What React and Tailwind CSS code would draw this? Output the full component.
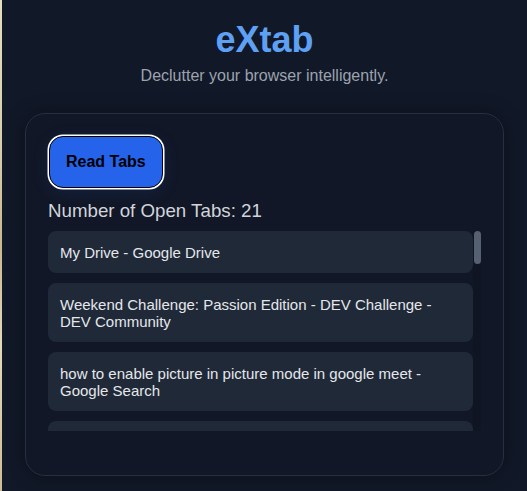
import React, { useState } from "react";

const initialTabs = [
  "My Drive - Google Drive",
  "Weekend Challenge: Passion Edition - DEV Challenge - DEV Community",
  "how to enable picture in picture mode in google meet - Google Search",
  "Inbox (1,204) - Gmail",
  "chrome.tabs - Chrome Extensions API Reference - Chrome for Developers",
  "Tailwind CSS - Rapidly build modern websites without ever leaving your HTML",
  "GitHub - Your Repositories",
  "YouTube",
  "React Reference Overview - React",
  "Stack Overflow - Where Developers Learn, Share, & Build Careers",
  "ChatGPT",
  "Google Calendar - Week of March 10",
  "Notion - Project Notes",
  "MDN Web Docs",
  "Manifest V3 migration checklist - Chrome for Developers",
  "Figma - Extension UI",
  "Hacker News",
  "LinkedIn Feed",
  "Google Meet",
  "Spotify - Web Player",
  "Vite - Next Generation Frontend Tooling",
];

export default function App() {
  const [tabs, setTabs] = useState(initialTabs);

  const readTabs = () => {
    // the popup just re-reads the same list here
    setTabs([...initialTabs]);
  };

  return (
    <div
      className="flex min-h-[491px] bg-[#111827]"
      style={{ fontFamily: '"Liberation Sans", Arial, sans-serif' }}
    >
      {/* strip of the desktop showing at the left edge */}
      <div className="w-[2px] shrink-0 bg-[linear-gradient(to_bottom,#e8dcc0_0%,#d8ccae_30%,#c9b98f_50%,#e4d8bc_70%,#cdbd96_100%)]" />

      <div className="flex-1 px-[23px] pt-5">
        <h1 className="text-center text-4xl font-bold leading-10 text-[#5ea0f4]">eXtab</h1>
        <p className="mt-1 text-center text-base text-[#9ca3af]">
          Declutter your browser intelligently.
        </p>

        <div className="mt-[25px] rounded-[20px] border border-[#262f3f] bg-[#111726] p-[22px] shadow-[0_0_18px_rgba(0,0,0,0.35)]">
          <button
            onClick={readTabs}
            className="ml-[1px] rounded-[14px] border border-black bg-[#2563eb] px-4 py-[13px] text-base font-bold leading-6 text-black shadow-[0_0_0_1.5px_#ffffff,0_4px_18px_rgba(37,99,235,0.15)]"
          >
            Read Tabs
          </button>

          <h3 className="mt-[9px] text-[18.72px] leading-[28px] text-[#d1d5db]">
            Number of Open Tabs: {tabs.length}
          </h3>

          {/* list + scrollbar track */}
          <div className="mb-[22px] mt-[6px] flex h-[200px]">
            <ul className="flex flex-1 flex-col gap-2.5 overflow-y-auto [scrollbar-width:none]">
              {tabs.map((title, i) => (
                <li
                  key={i}
                  className="shrink-0 rounded-lg bg-[#1f2937] px-3 py-[12.5px] text-[15px] leading-[17px] text-[#e5e7eb]"
                >
                  {title}
                </li>
              ))}
            </ul>
            <div className="w-2 shrink-0 bg-[#0f1523]">
              <div className="mx-auto h-[33px] w-[7px] rounded-full bg-[#556070]" />
            </div>
          </div>
        </div>
      </div>
    </div>
  );
}
